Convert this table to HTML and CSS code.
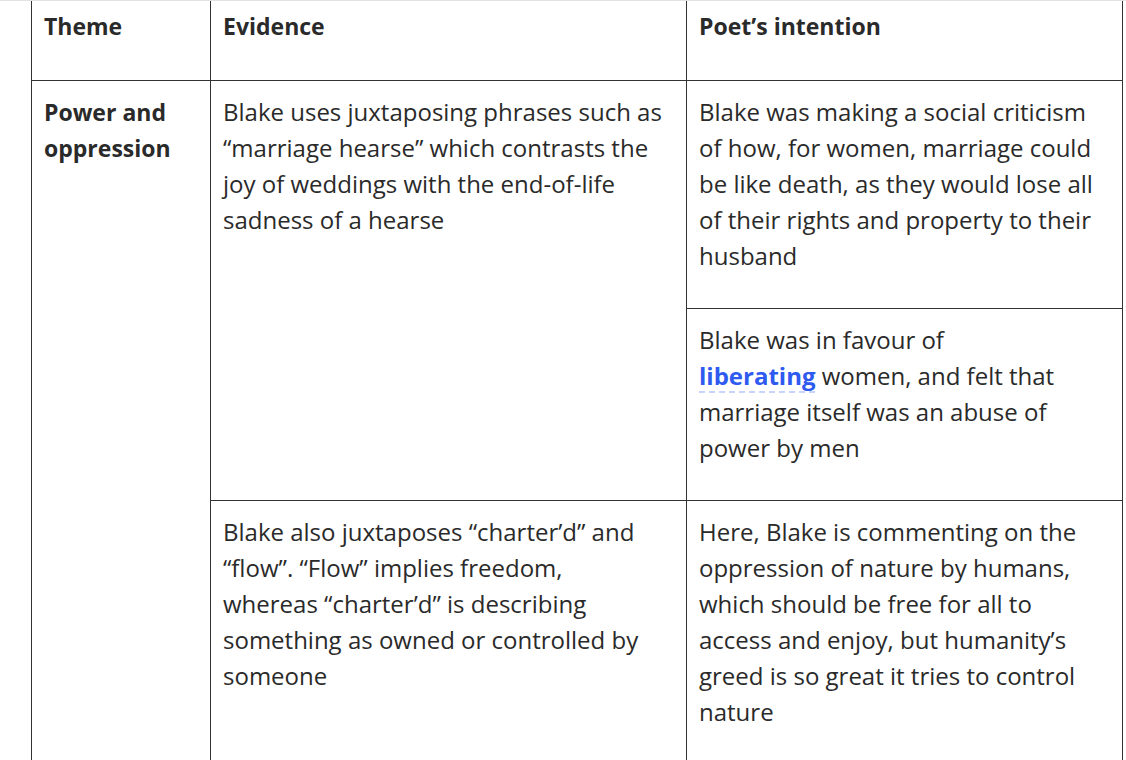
FILE: index.html
```html
<!DOCTYPE html>
<html>
<head>
<meta charset="utf-8">
<link rel="stylesheet" href="styles.css">
</head>
<body>
<div class="page">
  <table class="grid">
    <colgroup>
      <col class="c1"><col class="c2"><col class="c3">
    </colgroup>
    <thead>
      <tr>
        <th>Theme</th>
        <th>Evidence</th>
        <th>Poet’s intention</th>
      </tr>
    </thead>
    <tbody>
      <tr>
        <td rowspan="3" class="theme">Power and oppression</td>
        <td rowspan="2">Blake uses juxtaposing phrases such as “marriage hearse” which contrasts the joy of weddings with the end-of-life sadness of a hearse</td>
        <td>Blake was making a social criticism of how, for women, marriage could be like death, as they would lose all of their rights and property to their husband</td>
      </tr>
      <tr>
        <td>Blake was in favour of<br><span class="term">liberating</span> women, and felt that marriage itself was an abuse of power by men</td>
      </tr>
      <tr>
        <td class="last">Blake also juxtaposes “charter’d” and “flow”. “Flow” implies freedom,<br>whereas “charter’d” is describing something as owned or controlled by someone</td>
        <td class="last">Here, Blake is commenting on the oppression of nature by humans, which should be free for all to access and enjoy, but humanity’s greed is so great it tries to control nature</td>
      </tr>
    </tbody>
  </table>
</div>
</body>
</html>
```
FILE: styles.css
```css
html, body {
  margin: 0;
  padding: 0;
  background: #ffffff;
}
body {
  font-family: "Open Sans", "Inter", sans-serif;
  color: #2a2a2a;
  overflow: hidden;
  height: 760px;
}
.page {
  border-top: 1px solid #e2e2e2;
  padding-left: 31px;
  height: 759px;
  overflow: hidden;
}
.grid {
  border-collapse: collapse;
  table-layout: fixed;
  width: 1091px;
  margin-top: -8px;
}
.c1 { width: 179px; }
.c2 { width: 476px; }
.c3 { width: 436px; }
.grid th, .grid td {
  border: 1px solid #333333;
  vertical-align: top;
  text-align: left;
  padding: 13px 12px 34px 12px;
  font-size: 24px;
  line-height: 36px;
  letter-spacing: 0;
}
.grid th {
  font-weight: 700;
  font-size: 23px;
  padding-top: 14px;
  padding-bottom: 36px;
}
.grid td.theme {
  font-weight: 700;
  font-size: 23px;
}
.grid td {
  font-weight: 400;
}
.grid td.last {
  height: 300px;
}
.term {
  color: #2f5af0;
  font-weight: 700;
  text-decoration: underline dashed #c8d4fb;
  text-decoration-thickness: 2px;
  text-underline-offset: 6px;
}
```
